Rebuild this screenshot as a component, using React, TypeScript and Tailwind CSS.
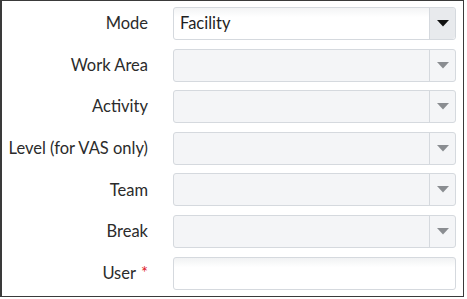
const FIELDS = [
  { label: 'Mode', kind: 'select', value: 'Facility', enabled: true },
  { label: 'Work Area', kind: 'select', value: '', enabled: false },
  { label: 'Activity', kind: 'select', value: '', enabled: false },
  { label: 'Level (for VAS only)', kind: 'select', value: '', enabled: false },
  { label: 'Team', kind: 'select', value: '', enabled: false },
  { label: 'Break', kind: 'select', value: '', enabled: false },
  { label: 'User', kind: 'text', value: '', enabled: true, required: true },
]

function Caret({ dark }: { dark: boolean }) {
  return (
    <svg width="12" height="7" viewBox="0 0 12 7">
      <path d="M0 0h12L6 6.5z" fill={dark ? '#111111' : '#8a8d91'} />
    </svg>
  )
}

export default function App() {
  return (
    <div className="w-[467px] h-[299px] bg-white" style={{ fontFamily: 'Lato, "Noto Sans", sans-serif' }}>
      <div className="w-[464px] h-[297px] border border-l-2 border-[#3a3a3a] pt-[6px] pr-[7px]">
        <div className="grid grid-cols-[146px_1fr] gap-x-[25px] gap-y-[8.6px]">
          {FIELDS.map((f) => (
            <div key={f.label} className="contents">
              <div className="h-[33px] flex items-center justify-end text-[16.5px] text-[#2b2b2b] whitespace-nowrap">
                {f.label}
                {f.required && <span className="text-[#e0262b] ml-[5px]">*</span>}
              </div>
              {f.kind === 'select' ? (
                <div
                  className={
                    'h-[33px] flex rounded-[3px] border border-[#d5d9de] ' +
                    (f.enabled ? 'bg-gradient-to-b from-[#f3f4f5] to-white to-[30%]' : 'bg-[#f4f5f7]')
                  }
                >
                  <div className="flex-1 flex items-center px-[6px] text-[16.5px] text-[#1f1f1f]">{f.value}</div>
                  <div
                    className={
                      'w-[26px] flex items-center justify-center border-l border-[#d5d9de] rounded-r-[3px] ' +
                      (f.enabled ? 'bg-[#e8eaed]' : '')
                    }
                  >
                    <Caret dark={f.enabled} />
                  </div>
                </div>
              ) : (
                <div className="h-[33px] rounded-[3px] border border-[#d5d9de] bg-gradient-to-b from-[#f1f2f3] to-white to-[30%]" />
              )}
            </div>
          ))}
        </div>
      </div>
    </div>
  )
}
